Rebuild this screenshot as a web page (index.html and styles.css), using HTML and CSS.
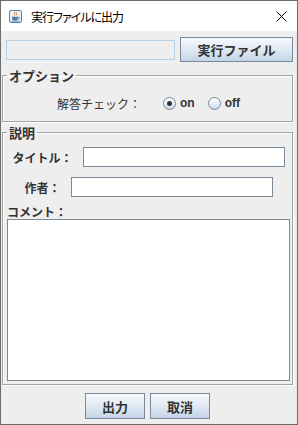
FILE: index.html
```html
<!DOCTYPE html>
<html lang="ja">
<head>
    <meta charset="UTF-8">
    <meta name="viewport" content="width=device-width, initial-scale=1.0">
    <title>実行ファイルに出力</title>
    <link rel="stylesheet" href="styles.css">
</head>
<body>
    <div class="window">
        <div class="titlebar">
            <svg class="app-icon" viewBox="0 0 13 13">
                <rect x="0.5" y="0.5" width="12" height="12" rx="1.5" fill="#eaf1f8" stroke="#5a7fa8"/>
                <path d="M5.6 2.3c-1 1 1 1.6 0 3.2M7.4 1.8c-1 1 1 1.6 0 3.2" stroke="#e2761b" fill="none" stroke-width="0.9"/>
                <path d="M3 6.8h6v1.6a2 2 0 0 1-2 2H5a2 2 0 0 1-2-2z" fill="#4f7fb0"/>
                <path d="M9 7.3h.7a1 1 0 0 1 0 2H9" stroke="#4f7fb0" fill="none" stroke-width="0.8"/>
                <path d="M2.4 11.2h8" stroke="#4f7fb0" stroke-width="0.8"/>
            </svg>
            <span class="title">実行ファイルに出力</span>
            <svg class="close" viewBox="0 0 11 11">
                <path d="M0.5 0.5l10 10M10.5 0.5l-10 10" stroke="#000" stroke-width="1"/>
            </svg>
        </div>

        <div class="content">
            <div class="file-row">
                <input class="file-path" type="text" readonly>
                <button class="btn btn-file">実行ファイル</button>
            </div>

            <fieldset class="group options">
                <legend>オプション</legend>
                <div class="option-row">
                    <span class="option-label">解答チェック：</span>
                    <label class="radio"><span class="radio-mark checked"></span>on</label>
                    <label class="radio"><span class="radio-mark"></span>off</label>
                </div>
            </fieldset>

            <fieldset class="group desc">
                <legend>説明</legend>
                <div class="field-row">
                    <label>タイトル：</label>
                    <input class="field" type="text">
                </div>
                <div class="field-row">
                    <label>作者：</label>
                    <input class="field" type="text">
                </div>
                <div class="comment-label">コメント：</div>
                <textarea class="comment"></textarea>
            </fieldset>

            <div class="actions">
                <button class="btn">出力</button>
                <button class="btn">取消</button>
            </div>
        </div>
    </div>
</body>
</html>
```

FILE: styles.css
```css
* {
    box-sizing: border-box;
}
body {
    margin: 0;
    font-family: "Noto Sans CJK JP", sans-serif;
    color: #333333;
}
.window {
    width: 298px;
    height: 425px;
    border: 1px solid #6c6c6c;
    background-color: #eeeeee;
    display: flex;
    flex-direction: column;
}
.titlebar {
    height: 30px;
    flex-shrink: 0;
    background-color: #ffffff;
    display: flex;
    align-items: center;
}
.app-icon {
    width: 13px;
    height: 13px;
    margin-left: 8px;
}
.title {
    margin-left: 9px;
    font-size: 12px;
    letter-spacing: -1px;
    color: #000000;
    font-feature-settings: "palt";
}
.close {
    width: 11px;
    height: 11px;
    margin-left: auto;
    margin-right: 10px;
}
.content {
    display: flex;
    flex-direction: column;
    padding: 0 4px 0 1px;
}
.file-row {
    display: flex;
    align-items: center;
    gap: 5px;
    padding: 6px 0 0 4px;
}
.file-path {
    width: 169px;
    height: 20px;
    margin: 0;
    border: 1px solid #b8cfe5;
    background-color: #eeeeee;
    padding: 0;
}
.btn {
    height: 26px;
    width: 60px;
    margin: 0;
    padding: 0;
    border: 1px solid #7a8a99;
    background: linear-gradient(to bottom, #f6f9fc 0%, #e3ebf4 45%, #c3d4e7 100%);
    font-family: "Noto Sans CJK JP", sans-serif;
    font-size: 13px;
    font-weight: bold;
    color: #333333;
}
.btn-file {
    width: 113px;
    height: 25px;
}
.group {
    margin: 0;
    border: 1px solid #a3a3a3;
    box-shadow: 1px 1px 0 #ffffff, inset 1px 1px 0 #ffffff;
    padding: 0 2px 0 4px;
}
.group legend {
    font-size: 13px;
    line-height: 13px;
    font-weight: bold;
    color: #333333;
    padding: 0 2px;
}
.options {
    margin-top: 7px;
    padding-top: 13px;
    padding-bottom: 10px;
}
.option-row {
    height: 16px;
    display: flex;
    align-items: center;
    justify-content: center;
}
.option-label {
    font-size: 12px;
    margin-right: 22px;
}
.radio {
    display: inline-flex;
    align-items: center;
    gap: 4px;
    font-family: "Liberation Sans", sans-serif;
    font-size: 12px;
    font-weight: bold;
    margin-right: 13px;
}
.radio:last-child {
    margin-right: 0;
}
.radio-mark {
    width: 13px;
    height: 13px;
    border-radius: 50%;
    border: 1px solid #7a8a99;
    background: linear-gradient(to bottom, #ffffff 0%, #e6eef7 50%, #c5d6e9 100%);
    display: flex;
    align-items: center;
    justify-content: center;
}
.radio-mark.checked::after {
    content: '';
    width: 5px;
    height: 5px;
    border-radius: 50%;
    background-color: #333333;
}
.desc {
    margin-top: 4px;
    padding-top: 8px;
    padding-bottom: 3px;
}
.field-row {
    display: flex;
    align-items: center;
    justify-content: center;
    gap: 10px;
    font-size: 12px;
    font-weight: bold;
}
.field-row + .field-row {
    margin-top: 10px;
}
.field {
    width: 202px;
    height: 20px;
    margin: 0;
    padding: 0;
    border: 1px solid #7a8a99;
    background-color: #ffffff;
}
.comment-label {
    margin-top: 7px;
    font-size: 12px;
    line-height: 15px;
    font-weight: bold;
}
.comment {
    display: block;
    width: 283px;
    height: 162px;
    margin: 0;
    padding: 0;
    border: 1px solid #7a8a99;
    background-color: #ffffff;
    resize: none;
}
.actions {
    display: flex;
    justify-content: center;
    gap: 5px;
    margin-top: 8px;
}
```
